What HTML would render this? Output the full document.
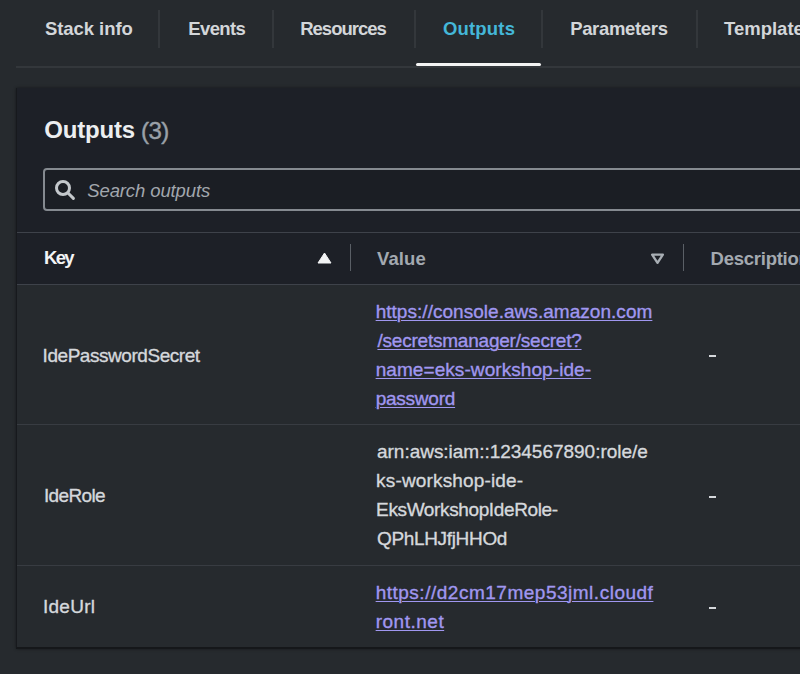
<!DOCTYPE html>
<html><head><meta charset="utf-8">
<style>
html,body{margin:0;padding:0;}
body{width:800px;height:674px;overflow:hidden;position:relative;background:#262a2e;font-family:"Liberation Sans",sans-serif;}
.a{position:absolute;white-space:nowrap;}
.tab{position:absolute;font-size:18.5px;font-weight:bold;color:#d3d6d9;line-height:28px;white-space:nowrap;}
.sep{position:absolute;top:10px;width:2px;height:38px;background:#33373b;}
.panel{position:absolute;left:16px;top:88px;width:800px;height:559px;background:#1d2027;border-left:1px solid #17191d;border-bottom:2px solid #15171a;box-shadow:0 0 3px rgba(0,0,0,0.45);}
.hl{position:absolute;height:1px;background:#3b3f46;}
.txt{position:absolute;font-size:19px;color:#d5d8dc;line-height:29px;white-space:nowrap;-webkit-text-stroke:0.35px #d5d8dc;}
.lnk{position:absolute;font-size:19px;color:#a097f0;line-height:29px;white-space:nowrap;text-decoration:underline;text-underline-offset:1.5px;text-decoration-thickness:1.2px;-webkit-text-stroke:0.35px #a097f0;}
.th{position:absolute;font-size:18.5px;font-weight:bold;line-height:28px;white-space:nowrap;}
</style></head><body>
<!-- tabs -->
<div id="t_stack" class="tab" style="left:45.00px;top:15.00px;letter-spacing:-0.070px;">Stack info</div>
<div class="sep" style="left:158px"></div>
<div id="t_events" class="tab" style="left:188.27px;top:15.00px;letter-spacing:-0.608px;">Events</div>
<div class="sep" style="left:272px"></div>
<div id="t_res" class="tab" style="left:300.18px;top:15.00px;letter-spacing:-0.985px;">Resources</div>
<div class="sep" style="left:413.5px"></div>
<div id="t_out" class="tab" style="left:443.00px;top:15.00px;letter-spacing:0.170px;color:#44b7d8;">Outputs</div>
<div class="sep" style="left:540.5px"></div>
<div id="t_par" class="tab" style="left:570.13px;top:15.00px;letter-spacing:-0.330px;">Parameters</div>
<div class="sep" style="left:696px"></div>
<div id="t_tpl" class="tab" style="left:724.00px;top:15.00px;letter-spacing:0.000px;">Template</div>
<div class="hl" style="left:16px;top:66px;width:784px;height:2px;background:#33373b"></div>
<div class="a" style="left:416px;top:63px;width:125px;height:3px;background:#f4f4f4;border-radius:2px"></div>

<!-- panel -->
<div class="panel"></div>
<div id="h_out" class="a" style="left:44.19px;top:115.00px;letter-spacing:-0.190px;font-size:24px;font-weight:bold;color:#eceef0;line-height:30px;">Outputs</div>
<div id="h_cnt" class="a" style="left:140.95px;top:115.50px;letter-spacing:-0.495px;font-size:24px;color:#9aa0a8;line-height:30px;-webkit-text-stroke:0.4px #9aa0a8;">(3)</div>
<div class="a" style="left:43px;top:168px;width:780px;height:39px;border:2px solid #858a90;border-radius:4px;background:#1b1e24"></div>
<svg class="a" style="left:54px;top:178.8px" width="22" height="22" viewBox="0 0 22 22"><circle cx="9" cy="9" r="6.5" fill="none" stroke="#c4c8cc" stroke-width="3"/><line x1="14" y1="14" x2="19.4" y2="19.4" stroke="#c4c8cc" stroke-width="3" stroke-linecap="round"/></svg>
<div id="srch" class="a" style="left:87.22px;top:177.00px;letter-spacing:-0.110px;font-size:18.5px;font-style:italic;color:#a2a7ad;line-height:28px;">Search outputs</div>

<!-- table -->
<div class="hl" style="left:17px;top:232px;width:783px;background:#3e424a"></div>
<div class="hl" style="left:17px;top:284px;width:783px;background:#3e424a"></div>
<div class="a" style="left:17px;top:285px;width:783px;height:362px;background:#262a2e"></div>
<div class="hl" style="left:17px;top:424px;width:783px;background:#383c42"></div>
<div class="hl" style="left:17px;top:565px;width:783px;background:#383c42"></div>

<div id="th_key" class="th" style="left:44.04px;top:244.30px;letter-spacing:-1.720px;color:#f3f4f5;">Key</div>
<svg class="a" style="left:316.7px;top:251.8px" width="15" height="12" viewBox="0 0 15 12"><path d="M7.5 1 L14 11 L1 11 Z" fill="#f3f4f5" stroke="#f3f4f5" stroke-width="1" stroke-linejoin="round"/></svg>
<div class="a" style="left:350px;top:244px;width:1px;height:27px;background:#5a5f66"></div>
<div id="th_val" class="th" style="left:376.98px;top:245.00px;letter-spacing:0.120px;color:#a3a9b0;">Value</div>
<svg class="a" style="left:650px;top:253px" width="15" height="12" viewBox="0 0 15 12"><path d="M2.1 1.6 L12.9 1.6 L7.5 9.8 Z" fill="none" stroke="#a8aeb4" stroke-width="2.3" stroke-linejoin="round"/></svg>
<div class="a" style="left:683px;top:244px;width:1px;height:27px;background:#5a5f66"></div>
<div id="th_desc" class="th" style="left:710.60px;top:244.70px;letter-spacing:-0.250px;color:#a3a9b0;">Description</div>

<!-- row1 -->
<div id="k1" class="txt" style="left:42.57px;top:341.20px;letter-spacing:-0.450px;">IdePasswordSecret</div>
<div id="l1a" class="lnk" style="left:375.64px;top:297.00px;letter-spacing:0.037px;">https://console.aws.amazon.com</div>
<div id="l1b" class="lnk" style="left:377.44px;top:326.00px;letter-spacing:-0.217px;">/secretsmanager/secret?</div>
<div id="l1c" class="lnk" style="left:375.64px;top:355.00px;letter-spacing:0.077px;">name=eks-workshop-ide-</div>
<div id="l1d" class="lnk" style="left:375.64px;top:384.00px;letter-spacing:-0.231px;">password</div>
<div class="a" style="left:709px;top:355px;width:7px;height:2.4px;background:#d5d8dc"></div>

<!-- row2 -->
<div id="k2" class="txt" style="left:43.94px;top:480.50px;letter-spacing:-0.630px;">IdeRole</div>
<div id="v2a" class="txt" style="left:376.99px;top:436.50px;letter-spacing:-0.022px;">arn:aws:iam::1234567890:role/e</div>
<div id="v2b" class="txt" style="left:376.09px;top:466.20px;letter-spacing:0.159px;">ks-workshop-ide-</div>
<div id="v2c" class="txt" style="left:376.09px;top:495.20px;letter-spacing:-0.370px;">EksWorkshopIdeRole-</div>
<div id="v2d" class="txt" style="left:376.99px;top:523.70px;letter-spacing:-0.335px;">QPhLHJfjHHOd</div>
<div class="a" style="left:709px;top:495.5px;width:7px;height:2.4px;background:#d5d8dc"></div>

<!-- row3 -->
<div id="k3" class="txt" style="left:43.00px;top:591.90px;letter-spacing:0.248px;">IdeUrl</div>
<div id="l3a" class="lnk" style="left:375.64px;top:578.00px;letter-spacing:0.511px;">https://d2cm17mep53jml.cloudf</div>
<div id="l3b" class="lnk" style="left:375.64px;top:607.00px;letter-spacing:0.514px;">ront.net</div>
<div class="a" style="left:709px;top:607px;width:7px;height:2.4px;background:#d5d8dc"></div>
</body></html>
